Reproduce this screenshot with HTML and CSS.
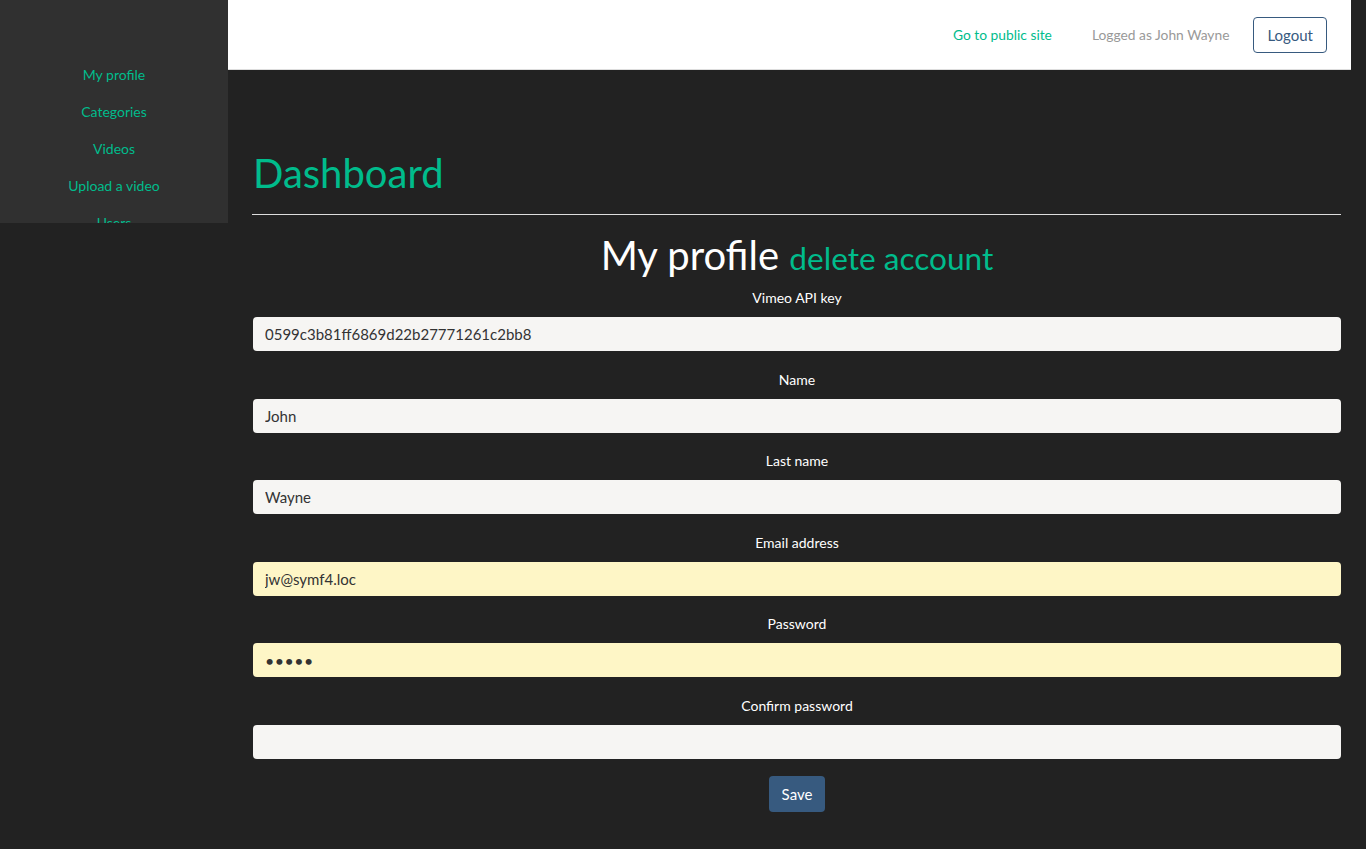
FILE: index.html
```html
<!DOCTYPE html>
<html lang="en">
<head>
<meta charset="utf-8">
<title>Dashboard - My profile</title>
<link rel="stylesheet" href="styles.css">
</head>
<body>
<div class="layout">
  <nav class="sidebar">
    <a href="#" class="side-link">My profile</a>
    <a href="#" class="side-link">Categories</a>
    <a href="#" class="side-link">Videos</a>
    <a href="#" class="side-link">Upload a video</a>
    <a href="#" class="side-link">Users</a>
  </nav>
  <div class="main">
    <header class="topbar">
      <a href="#" class="public-link">Go to public site</a>
      <span class="logged">Logged as John Wayne</span>
      <a href="#" class="logout">Logout</a>
    </header>
    <section class="content">
      <h1 class="page-title">Dashboard</h1>
      <hr class="divider">
      <h2 class="section-title">My profile <a href="#" class="delete-link">delete account</a></h2>
      <form class="profile-form">
        <div class="form-group">
          <label class="form-label">Vimeo API key</label>
          <input class="form-input" type="text" value="0599c3b81ff6869d22b27771261c2bb8">
        </div>
        <div class="form-group">
          <label class="form-label">Name</label>
          <input class="form-input" type="text" value="John">
        </div>
        <div class="form-group">
          <label class="form-label">Last name</label>
          <input class="form-input" type="text" value="Wayne">
        </div>
        <div class="form-group">
          <label class="form-label">Email address</label>
          <input class="form-input autofill" type="text" value="jw@symf4.loc">
        </div>
        <div class="form-group">
          <label class="form-label">Password</label>
          <input class="form-input autofill" type="password" value="12345">
        </div>
        <div class="form-group">
          <label class="form-label">Confirm password</label>
          <input class="form-input" type="password" value="">
        </div>
        <div class="form-actions">
          <button type="button" class="btn-save">Save</button>
        </div>
      </form>
    </section>
  </div>
</div>
</body>
</html>
```

FILE: styles.css
```css
* { box-sizing: border-box; }
html, body {
  margin: 0;
  padding: 0;
  background: #222222;
  font-family: Lato, "Open Sans", "Liberation Sans", sans-serif;
  color: #ffffff;
}
.layout {
  display: flex;
  align-items: flex-start;
  min-height: 849px;
}
.sidebar {
  width: 228px;
  flex: 0 0 228px;
  height: 223px;
  overflow: hidden;
  background: #303030;
  padding-top: 56px;
  display: flex;
  flex-direction: column;
  align-items: center;
}
.side-link {
  display: block;
  color: #00bc8c;
  text-decoration: none;
  font-size: 14px;
  line-height: 21px;
  padding: 8px 0;
}
.main {
  flex: 1;
  min-width: 0;
}
.topbar {
  margin-right: 15px;
  height: 70px;
  background: #ffffff;
  border-bottom: 1px solid #dddddd;
  display: flex;
  align-items: center;
  justify-content: flex-end;
  padding-right: 24px;
  font-size: 13.8px;
}
.public-link {
  color: #00bc8c;
  text-decoration: none;
  margin-right: 40px;
}
.logged {
  color: #999999;
  margin-right: 24px;
}
.logout {
  color: #375a7f;
  text-decoration: none;
  border: 1px solid #375a7f;
  border-radius: 4px;
  font-size: 15px;
  height: 36px;
  line-height: 35px;
  padding: 0 13px;
}
.content {
  padding: 0 25px 0 25px;
}
.page-title {
  margin: 80px 0 0 0;
  font-size: 40px;
  line-height: 46px;
  font-weight: 400;
  color: #00bc8c;
}
.divider {
  border: 0;
  border-top: 1px solid #dddddd;
  margin: 18px 0 0 -1px;
  height: 0;
}
.section-title {
  margin: 18px 0 0 0;
  text-align: center;
  font-size: 40px;
  line-height: 44px;
  font-weight: 400;
  color: #ffffff;
}
.delete-link {
  color: #00bc8c;
  text-decoration: none;
  font-size: 31.6px;
}
.profile-form {
  margin-top: 8px;
}
.form-group {
  display: flex;
  flex-direction: column;
  margin-bottom: 18.6px;
}
.form-label {
  text-align: center;
  font-size: 14px;
  line-height: 20px;
  margin-bottom: 9px;
  color: #ffffff;
}
.form-input {
  height: 34px;
  width: 100%;
  border: 0;
  border-radius: 4px;
  background: #f6f5f3;
  color: #333333;
  font-family: Lato, "Open Sans", "Liberation Sans", sans-serif;
  font-size: 15px;
  padding: 0 12px;
  outline: none;
}
.form-input[type="password"] {
  font-size: 16px;
  letter-spacing: 0.5px;
}
.form-input.autofill {
  background: #fef6c6;
}
.form-actions {
  display: flex;
  justify-content: center;
  margin-top: -2px;
}
.btn-save {
  background: #375a7f;
  color: #ffffff;
  border: 0;
  border-radius: 4px;
  font-family: Lato, "Open Sans", "Liberation Sans", sans-serif;
  font-size: 15px;
  height: 36px;
  width: 56px;
  padding: 0;
}
```
